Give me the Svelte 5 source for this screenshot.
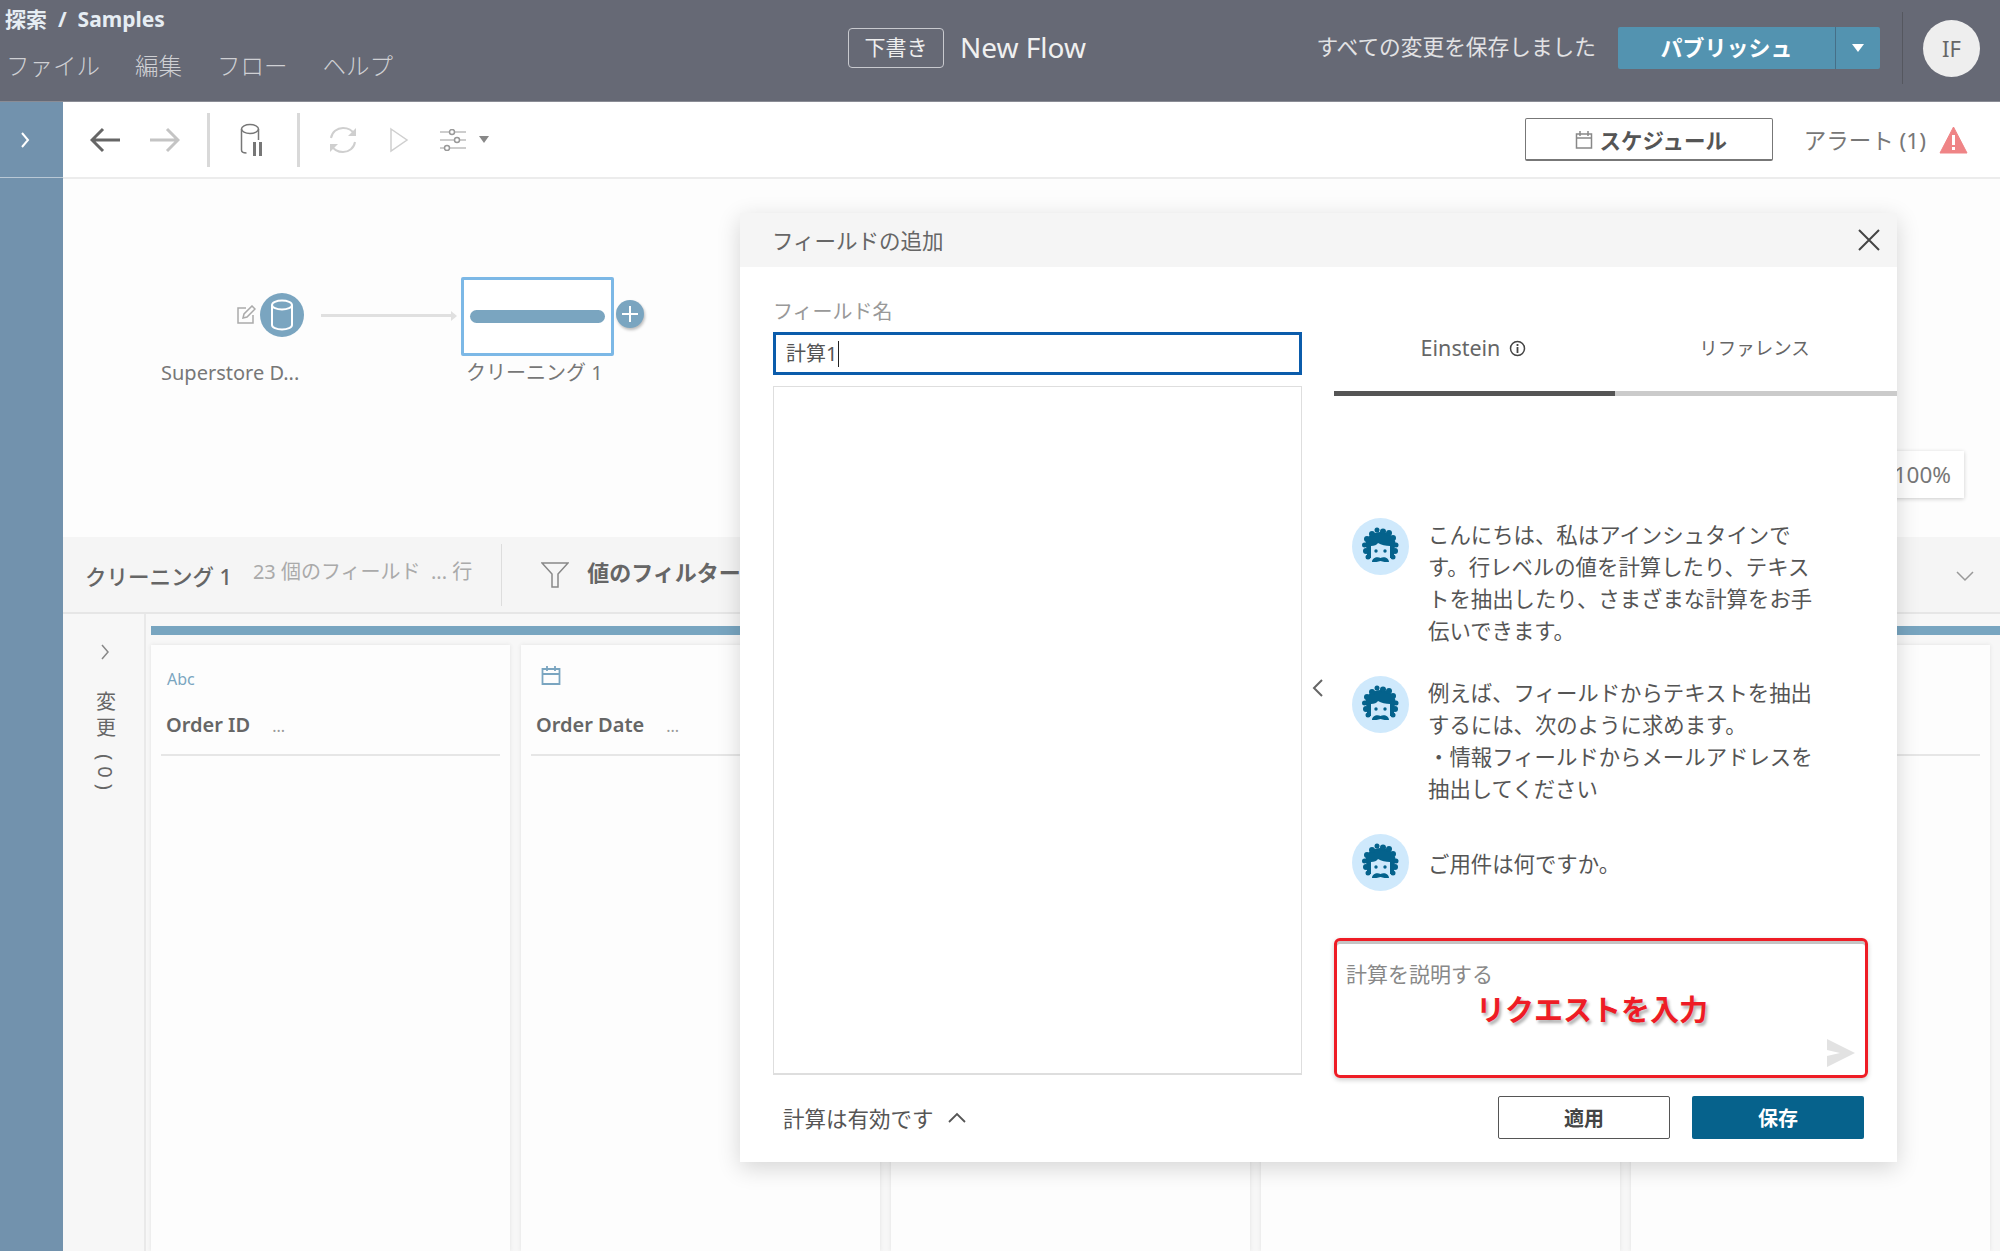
<script>
  const menus = ['ファイル', '編集', 'フロー', 'ヘルプ'];
  const columns = [
    { type: 'abc', name: 'Order ID' },
    { type: 'date', name: 'Order Date' },
    { type: '', name: '' },
    { type: '', name: '' },
    { type: '', name: '' }
  ];
  const messages = [
    { text: 'こんにちは、私はアインシュタインです。行レベルの値を計算したり、テキストを抽出したり、さまざまな計算をお手伝いできます。' },
    { text: '例えば、フィールドからテキストを抽出するには、次のように求めます。\n・情報フィールドからメールアドレスを抽出してください' },
    { text: 'ご用件は何ですか。', short: true }
  ];
  // bumps of the avatar's hair: [cx, cy, r]
  const hair = [
    [15, 21, 3], [12.5, 27, 2.5], [14, 33, 3], [16, 39, 2.5], [20, 16, 3], [25, 12, 2.5],
    [31, 13.5, 3], [37, 15, 3], [41, 20, 3], [44, 27, 2.5], [43, 33, 3], [41, 39, 2.5]
  ];
</script>

{#snippet avatar()}
  <svg class="avatar" viewBox="0 0 57 57" aria-hidden="true">
    <circle cx="28.5" cy="28.5" r="28.5" fill="#cfe9fc" />
    <g fill="#04628c">
      <ellipse cx="28.5" cy="26" rx="15" ry="12" />
      <path d="M15 28h27v12H15z" />
      {#each hair as [cx, cy, r]}
        <circle {cx} {cy} {r} />
      {/each}
    </g>
    <path fill="#cfe9fc" d="M19 28c3 0 6-1 7-3 3 2 8 3 12 3v16H19z" />
    <circle cx="24" cy="33" r="1.7" fill="#04628c" />
    <circle cx="33" cy="33" r="1.7" fill="#04628c" />
    <path fill="#04628c" d="M20 44c0-4 5-6 8.500-4 3.500-2 8.500 0 8.500 4-3 0-6 0-8.500-1-2.500 1-5.500 1-8.500 1z" />
  </svg>
{/snippet}

<div class="app">
  <header class="topbar">
    <div class="nav">
      <div class="crumbs">探索 &nbsp;/&nbsp; Samples</div>
      <nav class="menus">
        {#each menus as m}
          <span>{m}</span>
        {/each}
      </nav>
    </div>
    <div class="title">
      <span class="draft">下書き</span>
      <span class="flow-name">New Flow</span>
    </div>
    <div class="actions">
      <span class="saved">すべての変更を保存しました</span>
      <div class="publish">
        <span class="publish-main">パブリッシュ</span>
        <span class="publish-caret"><svg width="12" height="8" viewBox="0 0 12 8"><path d="M0 0h12L6 8z" fill="#fff" /></svg></span>
      </div>
      <span class="vline"></span>
      <span class="user">IF</span>
    </div>
  </header>

  <div class="body">
    <aside class="rail">
      <div class="rail-top">
        <svg width="10" height="16" viewBox="0 0 10 16"><path d="M2 1l6 7-6 7" fill="none" stroke="#fff" stroke-width="2" /></svg>
      </div>
    </aside>

    <main class="main">
      <div class="toolbar">
        <svg class="tool t-back" width="32" height="26" viewBox="0 0 32 26"><path d="M30 13H3M13 2L2 13l11 11" fill="none" stroke="#666" stroke-width="3" /></svg>
        <svg class="tool t-fwd" width="32" height="26" viewBox="0 0 32 26"><path d="M2 13h27M19 2l11 11-11 11" fill="none" stroke="#c4c4c4" stroke-width="3" /></svg>
        <span class="sep s1"></span>
        <svg class="tool t-db" width="26" height="34" viewBox="0 0 26 34">
          <ellipse cx="10" cy="6" rx="8.500" ry="4.500" fill="none" stroke="#777" stroke-width="1.500" />
          <path d="M1.500 6v21c0 2 2 3 5 3M18.500 6v11" fill="none" stroke="#777" stroke-width="1.500" />
          <path d="M13 19h3v14h-3zM19 19h3v14h-3z" fill="#777" />
        </svg>
        <span class="sep s2"></span>
        <svg class="tool t-sync" width="30" height="30" viewBox="0 0 30 30">
          <path d="M3 13C4 7 9 3 15 3c5 0 9 2 11 6M27 17c-1 6-6 10-12 10-5 0-9-2-11-6" fill="none" stroke="#cfcfcf" stroke-width="2" />
          <path d="M28 3v8h-8zM2 27v-8h8z" fill="#cfcfcf" />
        </svg>
        <svg class="tool t-play" width="20" height="26" viewBox="0 0 20 26"><path d="M2 2l16 11L2 24z" fill="none" stroke="#cfcfcf" stroke-width="1.500" /></svg>
        <svg class="tool t-sliders" width="28" height="22" viewBox="0 0 28 22">
          <path d="M1 3h26M1 11h26M1 19h26" stroke="#bdbdbd" stroke-width="1.500" />
          <circle cx="13" cy="3" r="2.500" fill="#fff" stroke="#999" stroke-width="1.500" />
          <circle cx="18" cy="11" r="2.500" fill="#fff" stroke="#999" stroke-width="1.500" />
          <circle cx="8" cy="19" r="2.500" fill="#fff" stroke="#999" stroke-width="1.500" />
        </svg>
        <svg class="tool t-caret" width="10" height="7" viewBox="0 0 10 7"><path d="M0 0h10L5 7z" fill="#888" /></svg>

        <div class="tool-right">
          <span class="schedule">
            <svg width="18" height="19" viewBox="0 0 18 19">
              <path d="M1.500 4h15v14h-15zM1.500 8h15M5 1v5M13 1v5" fill="none" stroke="#888" stroke-width="1.500" />
            </svg>
            スケジュール
          </span>
          <span class="alert">アラート (1)</span>
          <svg width="29" height="28" viewBox="0 0 29 28">
            <path d="M14.500 1L28 27H1z" fill="#ef8486" stroke="#ef8486" stroke-linejoin="round" />
            <path d="M13 9h3v10h-3zM13 21h3v3h-3z" fill="#fff" />
          </svg>
        </div>
      </div>

      <div class="canvas">
        <svg class="pen" width="20" height="20" viewBox="0 0 20 20">
          <path d="M10 3H2v15h15v-8" fill="none" stroke="#aaa" stroke-width="1.500" />
          <path d="M7 13l1-4 8-8 3 3-8 8z" fill="none" stroke="#aaa" stroke-width="1.500" />
        </svg>
        <span class="db-node">
          <svg width="24" height="32" viewBox="0 0 24 32">
            <ellipse cx="12" cy="6" rx="10" ry="4.500" fill="none" stroke="#fff" stroke-width="2" />
            <path d="M2 6v20c0 2.500 4.500 4.500 10 4.500s10-2 10-4.500V6" fill="none" stroke="#fff" stroke-width="2" />
          </svg>
        </span>
        <span class="link"></span>
        <span class="link-head"></span>
        <div class="clean-node"><span></span></div>
        <span class="plus">
          <svg width="16" height="16" viewBox="0 0 16 16"><path d="M8 0v16M0 8h16" stroke="#fff" stroke-width="2" /></svg>
        </span>
        <span class="node-label l1">Superstore D...</span>
        <span class="node-label l2">クリーニング 1</span>
        <span class="zoom-chip">100%</span>
      </div>

      <div class="profile-head">
        <span class="step-name">クリーニング 1</span>
        <span class="step-meta">23 個のフィールド &nbsp;... 行</span>
        <span class="head-sep"></span>
        <svg width="28" height="26" viewBox="0 0 28 26"><path d="M1 1h26L17 12v13h-6V12z" fill="none" stroke="#888" stroke-width="1.500" /></svg>
        <span class="filter-label">値のフィルター</span>
        <svg class="head-chevron" width="18" height="11" viewBox="0 0 18 11"><path d="M1 1l8 8 8-8" fill="none" stroke="#999" stroke-width="1.500" /></svg>
      </div>

      <div class="profile">
        <div class="changes">
          <svg width="10" height="16" viewBox="0 0 10 16"><path d="M2 1l6 7-6 7" fill="none" stroke="#888" stroke-width="1.500" /></svg>
          <span class="changes-label">変更 (0)</span>
        </div>
        <div class="grid-wrap">
          <div class="color-bar"></div>
          <div class="cols">
            {#each columns as c}
              <div class="col">
                <div class="col-type">
                  {#if c.type === 'abc'}
                    <span class="abc">Abc</span>
                  {:else if c.type === 'date'}
                    <svg class="date-icon" width="20" height="20" viewBox="0 0 20 20">
                      <path d="M1.500 4h17v15h-17zM1.500 9h17M6 1v5M14 1v5" fill="none" stroke="#7aa5c0" stroke-width="1.800" />
                    </svg>
                  {/if}
                </div>
                <div class="col-name">
                  {#if c.name}{c.name}<span class="dots">...</span>{/if}
                </div>
              </div>
            {/each}
          </div>
        </div>
      </div>
    </main>
  </div>

  <section class="modal">
    <div class="modal-title">
      <span>フィールドの追加</span>
      <svg width="22" height="22" viewBox="0 0 22 22"><path d="M1 1l20 20M21 1L1 21" stroke="#444" stroke-width="2" /></svg>
    </div>
    <div class="modal-body">
      <div class="editor">
        <label class="field-label" for="fname">フィールド名</label>
        <div class="name-input" id="fname">計算1<span class="caret"></span></div>
        <div class="formula"></div>
      </div>
      <svg class="collapse" width="12" height="18" viewBox="0 0 12 18"><path d="M10 1L2 9l8 8" fill="none" stroke="#666" stroke-width="2" /></svg>
      <div class="assistant">
        <div class="tabs">
          <div class="tab active">
            Einstein
            <svg width="17" height="17" viewBox="0 0 17 17">
              <circle cx="8.500" cy="8.500" r="7" fill="none" stroke="#444" stroke-width="1.500" />
              <path d="M8.500 7v6M8.500 4v2" stroke="#444" stroke-width="1.800" />
            </svg>
          </div>
          <div class="tab ref">リファレンス</div>
        </div>
        <div class="chat">
          {#each messages as m}
            <div class="msg" class:short={m.short}>
              {@render avatar()}
              <p>{m.text}</p>
            </div>
          {/each}
        </div>
        <div class="prompt">
          <span class="placeholder">計算を説明する</span>
          <svg class="send" width="29" height="28" viewBox="0 0 29 28"><path d="M1 0l28 14L1 28V17l13-3-13-3z" fill="#e2e2e2" /></svg>
          <div class="callout">リクエストを入力</div>
        </div>
      </div>
    </div>
    <div class="modal-foot">
      <span class="valid">計算は有効です</span>
      <svg width="18" height="11" viewBox="0 0 18 11"><path d="M1 10l8-8 8 8" fill="none" stroke="#555" stroke-width="1.800" /></svg>
      <button type="button" class="btn apply">適用</button>
      <button type="button" class="btn save">保存</button>
    </div>
  </section>
</div>

<style>
  :global(body) {
    margin: 0;
    background: #fff;
  }
  .app {
    position: relative;
    width: 2000px;
    height: 1251px;
    overflow: hidden;
    display: flex;
    flex-direction: column;
    font-family: 'Noto Sans', 'Noto Sans CJK JP', sans-serif;
    color: #555;
  }

  .topbar {
    flex: none;
    height: 102px;
    box-sizing: border-box;
    background: #666975;
    border-bottom: 1px solid #8a8c95;
    display: grid;
    grid-template-columns: 848px 1fr auto;
    color: #fff;
  }
  .crumbs {
    padding: 6px 0 0 5px;
    font-size: 21px;
    line-height: 27px;
    font-weight: 700;
    color: #e6edf3;
  }
  .menus {
    display: flex;
    gap: 35px;
    padding: 17px 0 0 6px;
    font-size: 23.500px;
    line-height: 32px;
    font-weight: 300;
    color: #cfd0d4;
  }
  .title {
    display: flex;
    align-items: center;
    gap: 16px;
    height: 96px;
  }
  .draft {
    box-sizing: border-box;
    width: 96px;
    height: 40px;
    border: 1px solid #c8c9ce;
    border-radius: 4px;
    font-size: 21px;
    line-height: 36px;
    text-align: center;
    color: #eee;
  }
  .flow-name {
    font-size: 28px;
    color: #f0f0f0;
    margin-top: -2px;
  }
  .actions {
    display: flex;
    align-items: center;
    height: 96px;
    padding-right: 20px;
  }
  .saved {
    font-size: 21.700px;
    color: #e2e2e4;
    margin: -6px 22px 0 0;
  }
  .publish {
    display: flex;
    width: 262px;
    height: 42px;
    border-radius: 2px;
    background: #5393b0;
    margin: -1px 22px 0 0;
  }
  .publish-main {
    flex: 1;
    text-align: center;
    font-size: 22px;
    line-height: 40px;
    font-weight: 700;
    border-right: 1px solid #466f87;
  }
  .publish-caret {
    width: 44px;
    display: flex;
    align-items: center;
    justify-content: center;
  }
  .vline {
    width: 1px;
    height: 72px;
    background: #55575f;
    margin-right: 20px;
  }
  .user {
    width: 57px;
    height: 57px;
    border-radius: 50%;
    background: #eeeeee;
    color: #666;
    font-size: 22px;
    line-height: 57px;
    text-align: center;
  }

  .body {
    flex: 1;
    display: flex;
    min-height: 0;
  }
  .rail {
    flex: none;
    width: 63px;
    background: #7292ad;
  }
  .rail-top {
    height: 76px;
    border-bottom: 1px solid #b9c8d5;
    display: flex;
    align-items: center;
    padding-left: 20px;
    box-sizing: border-box;
  }
  .main {
    flex: 1;
    min-width: 0;
    display: flex;
    flex-direction: column;
  }

  .toolbar {
    flex: none;
    height: 77px;
    box-sizing: border-box;
    border-bottom: 2px solid #ececec;
    display: flex;
    align-items: center;
    padding: 0 0 0 27px;
    background: #fff;
  }
  .t-fwd {
    margin-left: 26px;
  }
  .sep {
    width: 3px;
    height: 54px;
    background: #d9d9d9;
  }
  .s1 {
    margin-left: 27px;
  }
  .t-db {
    margin-left: 30px;
  }
  .s2 {
    margin-left: 31px;
  }
  .t-sync {
    margin-left: 28px;
  }
  .t-play {
    margin-left: 31px;
  }
  .t-sliders {
    margin-left: 30px;
  }
  .t-caret {
    margin-left: 12px;
  }
  .tool-right {
    margin-left: auto;
    display: flex;
    align-items: center;
    padding-right: 32px;
  }
  .schedule {
    box-sizing: border-box;
    width: 248px;
    height: 43px;
    border: 1px solid #777;
    border-bottom-width: 2px;
    border-radius: 2px;
    display: flex;
    align-items: center;
    justify-content: center;
    gap: 7px;
    padding-left: 4px;
    font-size: 21.500px;
    font-weight: 700;
    color: #555;
  }
  .alert {
    margin: 0 13px 0 31px;
    font-size: 22.500px;
    color: #777;
  }

  .canvas {
    flex: none;
    position: relative;
    height: 358px;
    background: #fdfdfd;
  }
  /* canvas coordinates are relative to x=63, y=179 */
  .pen {
    position: absolute;
    left: 173px;
    top: 126px;
  }
  .db-node {
    position: absolute;
    left: 197px;
    top: 114px;
    width: 44px;
    height: 44px;
    border-radius: 50%;
    background: #7aa5c0;
    display: flex;
    align-items: center;
    justify-content: center;
  }
  .link {
    position: absolute;
    left: 258px;
    top: 135px;
    width: 132px;
    height: 3px;
    background: #e0e0e0;
  }
  .link-head {
    position: absolute;
    left: 388px;
    top: 132px;
    border-left: 6px solid #e0e0e0;
    border-top: 5px solid transparent;
    border-bottom: 5px solid transparent;
  }
  .clean-node {
    position: absolute;
    left: 398px;
    top: 98px;
    box-sizing: border-box;
    width: 153px;
    height: 79px;
    background: #fff;
    border: 3px solid #7cb8e6;
    border-radius: 2px;
    display: flex;
    align-items: center;
    padding: 0 6px;
  }
  .clean-node span {
    flex: 1;
    height: 13px;
    border-radius: 7px;
    background: #7aa5c0;
  }
  .plus {
    position: absolute;
    left: 553px;
    top: 121px;
    width: 28px;
    height: 28px;
    border-radius: 50%;
    background: #7aa5c0;
    box-shadow: 1px 2px 3px #bbb;
    display: flex;
    align-items: center;
    justify-content: center;
  }
  .node-label {
    position: absolute;
    top: 180px;
    font-size: 20px;
    line-height: 28px;
    color: #777;
    white-space: nowrap;
  }
  .l1 {
    left: 98px;
  }
  .l2 {
    left: 403px;
  }
  .zoom-chip {
    position: absolute;
    right: 36px;
    top: 272px;
    width: 90px;
    height: 47px;
    box-sizing: border-box;
    background: #fff;
    box-shadow: 0 1px 4px #ccc;
    font-size: 22.500px;
    line-height: 47px;
    text-align: right;
    padding-right: 13px;
    color: #777;
  }

  .profile-head {
    flex: none;
    height: 77px;
    box-sizing: border-box;
    background: #f5f5f5;
    border-bottom: 2px solid #e6e6e6;
    display: flex;
    align-items: center;
    padding-left: 22px;
    position: relative;
  }
  .step-name {
    font-size: 21.500px;
    font-weight: 500;
    color: #666;
    margin-top: 1px;
  }
  .step-meta {
    margin-left: 21px;
    margin-top: -8px;
    font-size: 20px;
    color: #aaa;
  }
  .head-sep {
    width: 1px;
    height: 62px;
    background: #ddd;
    margin: 0 39px 0 29px;
  }
  .filter-label {
    margin: -7px 0 0 18px;
    font-size: 22px;
    font-weight: 700;
    color: #666;
    white-space: nowrap;
  }
  .head-chevron {
    position: absolute;
    right: 26px;
    top: 34px;
  }

  .profile {
    flex: 1;
    display: flex;
    min-height: 0;
    background: #f7f7f7;
  }
  .changes {
    flex: none;
    width: 83px;
    box-sizing: border-box;
    border-right: 2px solid #e9e9e9;
    display: flex;
    flex-direction: column;
    align-items: center;
    padding: 30px 0 0 3px;
  }
  .changes-label {
    margin-top: 31px;
    writing-mode: vertical-rl;
    font-size: 20px;
    letter-spacing: 6px;
    color: #666;
  }
  .grid-wrap {
    flex: 1;
    min-width: 0;
    padding: 12px 0 0 5px;
    display: flex;
    flex-direction: column;
  }
  .color-bar {
    height: 9px;
    background: #78a5c0;
  }
  .cols {
    flex: 1;
    display: flex;
    gap: 11px;
    margin-top: 10px;
    width: 1900px;
  }
  .col {
    flex: none;
    width: 359px;
    box-sizing: border-box;
    background: #fdfdfd;
    box-shadow: 0 0 4px #e2e2e2;
    padding: 0 10px;
  }
  .col-type {
    height: 64px;
    padding: 20px 6px 0;
    box-sizing: border-box;
  }
  .date-icon {
    margin-left: 4px;
  }
  .abc {
    font-size: 16px;
    line-height: 28px;
    color: #7aa5c0;
    display: block;
  }
  .col-name {
    height: 47px;
    padding: 0 5px;
    box-sizing: border-box;
    font-size: 20px;
    line-height: 32px;
    font-weight: 600;
    color: #666;
    border-bottom: 2px solid #e6e6e6;
  }
  .dots {
    margin-left: 22px;
    font-size: 16px;
    font-weight: 400;
    color: #999;
  }

  .modal {
    position: absolute;
    left: 740px;
    top: 213px;
    width: 1157px;
    height: 949px;
    background: #fff;
    box-shadow: 0 6px 22px rgba(0, 0, 0, 0.16);
    display: flex;
    flex-direction: column;
  }
  .modal-title {
    flex: none;
    height: 54px;
    box-sizing: border-box;
    padding: 0 17px 0 32px;
    background: #f5f5f5;
    display: flex;
    align-items: center;
    justify-content: space-between;
    font-size: 21.500px;
    color: #666;
  }
  .modal-title span {
    margin-top: -2px;
  }
  .modal-body {
    flex: 1;
    min-height: 0;
    display: flex;
    padding-left: 33px;
    position: relative;
  }
  .editor {
    flex: none;
    width: 529px;
    padding-top: 30px;
    display: flex;
    flex-direction: column;
  }
  .field-label {
    font-size: 20px;
    line-height: 30px;
    color: #999;
    margin-bottom: 5px;
  }
  .name-input {
    box-sizing: border-box;
    height: 43px;
    border: 3px solid #0b5cab;
    padding-left: 10px;
    font-size: 20px;
    line-height: 35px;
    color: #555;
    display: flex;
    align-items: center;
  }
  .caret {
    width: 1px;
    height: 26px;
    background: #222;
    margin-left: 1px;
  }
  .formula {
    box-sizing: border-box;
    height: 689px;
    margin-top: 11px;
    border: 1px solid #dedede;
    border-bottom-width: 2px;
  }
  .collapse {
    flex: none;
    margin: 412px 10px 0 10px;
    width: 12px;
  }
  .assistant {
    flex: 1;
    min-width: 0;
    display: flex;
    flex-direction: column;
  }
  .tabs {
    flex: none;
    display: flex;
    height: 130px;
    padding-top: 54px;
    box-sizing: border-box;
  }
  .tab {
    flex: 1;
    height: 75px;
    box-sizing: border-box;
    border-bottom: 5px solid #cbcbcb;
    display: flex;
    justify-content: center;
    align-items: flex-start;
    gap: 9px;
    padding-top: 12px;
    line-height: 30px;
    color: #666;
  }
  .tab.active {
    flex: none;
    width: 281px;
    font-size: 21.500px;
    border-bottom-color: #555;
    padding-right: 2px;
  }
  .tab.active svg {
    margin-top: 7px;
  }
  .tab.ref {
    font-size: 18.500px;
    padding-right: 3px;
  }
  .chat {
    flex: none;
    height: 541px;
    box-sizing: border-box;
    padding: 121px 0 0 18px;
    display: flex;
    flex-direction: column;
    gap: 30px;
  }
  .msg {
    display: flex;
    gap: 19px;
    align-items: flex-start;
  }
  .msg.short {
    align-items: center;
  }
  .avatar {
    flex: none;
    width: 57px;
    height: 57px;
  }
  .msg p {
    margin: 1px 0 -1px;
    width: 392px;
    font-size: 21.400px;
    line-height: 32px;
    color: #555;
    white-space: pre-line;
  }
  .prompt {
    position: relative;
    flex: none;
    width: 534px;
    height: 140px;
    box-sizing: border-box;
    border: 3px solid #ee1c25;
    border-radius: 6px;
    box-shadow: inset 0 3px 0 #c4c4c4, 0 2px 5px rgba(0, 0, 0, 0.2);
  }
  .placeholder {
    position: absolute;
    left: 9px;
    top: 18px;
    font-size: 21px;
    line-height: 30px;
    color: #888;
  }
  .send {
    position: absolute;
    right: 10px;
    bottom: 8px;
  }
  .callout {
    position: absolute;
    left: 139px;
    top: 47px;
    font-size: 29px;
    line-height: 44px;
    font-weight: 700;
    color: #ee1c25;
    text-shadow: 2px 3px 3px rgba(0, 0, 0, 0.3);
    white-space: nowrap;
  }
  .modal-foot {
    flex: none;
    height: 84px;
    display: flex;
    align-items: center;
    padding: 0 33px 5px 43px;
    box-sizing: border-box;
    gap: 14px;
  }
  .valid {
    font-size: 21.500px;
    color: #555;
  }
  .btn {
    box-sizing: border-box;
    width: 172px;
    height: 43px;
    border-radius: 2px;
    font-family: inherit;
    font-size: 20px;
    font-weight: 700;
    padding: 0;
  }
  .apply {
    margin-left: auto;
    background: #fff;
    border: 1px solid #555;
    color: #444;
  }
  .save {
    margin-left: 8px;
    background: #06628c;
    border: 0;
    color: #fff;
  }
</style>
